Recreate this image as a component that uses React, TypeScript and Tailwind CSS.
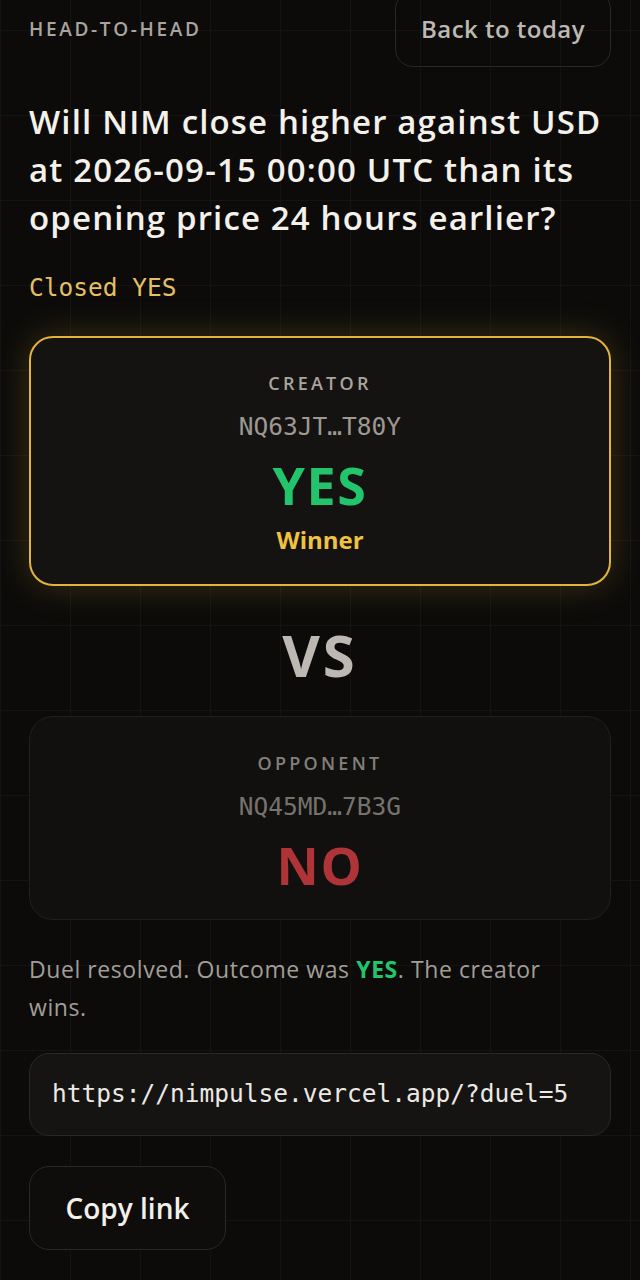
import React from 'react';

const mono = "font-['DejaVu_Sans_Mono','Liberation_Mono',monospace]";
const sans = "font-['Open_Sans','Noto_Sans',sans-serif]";

interface SideCardProps {
  label: string;
  address: string;
  pick: 'YES' | 'NO';
  winner?: boolean;
}

const SideCard: React.FC<SideCardProps> = ({ label, address, pick, winner }) => {
  return (
    <div
      className={`flex flex-col items-center rounded-[24px] ${
        winner
          ? 'h-[250px] border-2 border-[#e3b43a] bg-[#141311] pt-[33px] shadow-[0_0_36px_rgba(227,180,58,0.22)]'
          : 'h-[204px] border border-[#24221f] bg-[#121110] pt-[34px]'
      }`}
    >
      <div
        className={`text-[18px] leading-[24px] font-semibold tracking-[0.18em] ${
          winner ? 'text-[#aaa59e]' : 'text-[#8a8680]'
        }`}
      >
        {label}
      </div>
      <div
        className={`${mono} mt-[17px] text-[24.5px] leading-[30px] ${winner ? 'text-[#9d9891]' : 'text-[#7c7872]'}`}
      >
        {address}
      </div>
      <div
        className={`mt-[15px] text-[52px] leading-[56px] font-bold tracking-[0.03em] ${
          pick === 'YES' ? 'text-[#22c46c]' : 'text-[#b7373a]'
        }`}
      >
        {pick}
      </div>
      {winner && <div className="mt-[12px] text-[24px] leading-[30px] font-bold text-[#f0c243]">Winner</div>}
    </div>
  );
};

export default function App() {
  return (
    <div
      className={`min-h-screen overflow-hidden bg-[#0c0b0a] bg-[linear-gradient(to_right,rgba(255,255,255,0.03)_1px,transparent_1px),linear-gradient(to_bottom,rgba(255,255,255,0.03)_1px,transparent_1px)] bg-[size:70px_85px] bg-[position:0_30px] ${sans}`}
    >
      <div className="mx-auto w-[640px] px-[29px] pb-10">
        {/* header */}
        <div className="-mt-[9px] flex h-[76px] items-center justify-between">
          <div className="text-[19px] font-semibold tracking-[0.14em] text-[#a9a49d]">HEAD-TO-HEAD</div>
          <button className="h-[76px] w-[216px] rounded-[18px] border border-[#2a2826] text-[24px] font-semibold tracking-[0.02em] text-[#bdb9b2]">
            Back to today
          </button>
        </div>

        <h1 className="mt-[31px] text-[33px] leading-[48px] font-semibold tracking-[0.035em] text-[#f4f1ea]">
          Will NIM close higher against USD at 2026-09-15 00:00 UTC than its opening price 24 hours earlier?
        </h1>

        <div className={`${mono} mt-[28px] text-[24.5px] leading-[36px] text-[#e4bf63]`}>Closed YES</div>

        <div className="mt-[30px]">
          <SideCard label="CREATOR" address="NQ63JT…T80Y" pick="YES" winner />
        </div>

        <div className="mt-[39px] text-center text-[58px] leading-[60px] font-bold tracking-[0.05em] text-[#bdb9b2]">
          VS
        </div>

        <div className="mt-[31px] opacity-95">
          <SideCard label="OPPONENT" address="NQ45MD…7B3G" pick="NO" />
        </div>

        <p className="mt-[30px] max-w-[560px] text-[23px] leading-[38px] tracking-[0.025em] text-[#a29e97]">
          Duel resolved. Outcome was <span className="font-bold text-[#22c46c]">YES</span>. The creator wins.
        </p>

        <div className="mt-[27px] flex h-[83px] items-center rounded-[20px] border border-[#2a2826] bg-[#151412] px-[22px]">
          <span className={`${mono} text-[24.5px] text-[#ece9e4]`}>https://nimpulse.vercel.app/?duel=5</span>
        </div>

        <button className="mt-[30px] h-[84px] w-[197px] rounded-[20px] border border-[#2a2826] bg-[#0e0d0c] text-[28px] font-semibold text-[#f3f0ea]">
          Copy link
        </button>
      </div>
    </div>
  );
}
